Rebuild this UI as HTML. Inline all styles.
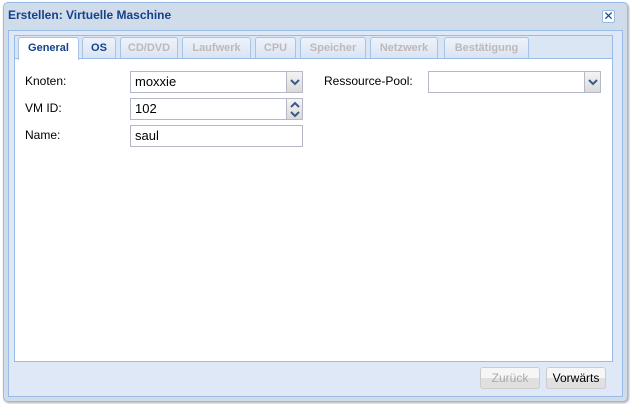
<!DOCTYPE html><html><head><style>
body{margin:0;width:630px;height:404px;background:#fff;font-family:"Liberation Sans",sans-serif;font-size:12px;position:relative;overflow:hidden}
.a{position:absolute;box-sizing:border-box}
.win{left:3px;top:2px;width:625px;height:400px;background:#d0dcea;border:1px solid #99bbe8;border-radius:5px;box-shadow:1px 1px 2px #aaa}
.tab{top:37px;height:21px;border:1px solid #a9c3e6;border-bottom:none;border-radius:3px 3px 0 0;background:linear-gradient(#eef3fb,#d9e4f3);font-weight:bold;font-size:11px;color:#c0b8b8;text-align:center;line-height:20px}
.fld{height:22px;border:1px solid #b5b8c8;background:#fff;padding-left:4px;line-height:20px;font-size:13px}
.trig{right:0;top:0;width:16px;height:20px;background:linear-gradient(#f4f4f4,#dadada);border-left:1px solid #b5b8c8}
.lbl{font-size:12px;color:#000}
.btn{top:367px;height:22px;border:1px solid #ccc;border-radius:3px;background:linear-gradient(#f6f6f6 50%,#e0e0e0 50%);text-align:center;line-height:20px;font-size:12px}
</style></head><body>
<div class="a win"></div>
<div class="a" style="left:8px;top:8px;font-weight:bold;color:#15428b;font-size:12px">Erstellen: Virtuelle Maschine</div>
<div class="a" style="left:602px;top:10px;width:13px;height:13px;border:1px solid #99bbe8;border-radius:2px;background:#fff;color:#15428b;font-size:12px;line-height:11px;text-align:center">✕</div>
<div class="a" style="left:8px;top:30px;width:615px;height:367px;background:#dfe8f6;border:1px solid #99bbe8"></div>
<div class="a" style="left:14px;top:35px;width:599px;height:327px;border:1px solid #99bbe8;background:#dbe6f5"></div>
<div class="a" style="left:15px;top:58px;width:597px;height:303px;background:#fff;border-top:1px solid #99bbe8"></div>
<div class="a tab" style="left:18px;width:61px;height:23px;background:#fff;color:#15428b">General</div>
<div class="a tab" style="left:82px;width:34px;color:#15428b">OS</div>
<div class="a tab" style="left:120px;width:58px">CD/DVD</div>
<div class="a tab" style="left:182px;width:69px">Laufwerk</div>
<div class="a tab" style="left:255px;width:41px">CPU</div>
<div class="a tab" style="left:300px;width:66px">Speicher</div>
<div class="a tab" style="left:370px;width:68px">Netzwerk</div>
<div class="a tab" style="left:444px;width:85px">Bestätigung</div>
<div class="a lbl" style="left:25px;top:74px">Knoten:</div>
<div class="a lbl" style="left:25px;top:101px">VM ID:</div>
<div class="a lbl" style="left:25px;top:128px">Name:</div>
<div class="a lbl" style="left:324px;top:74px">Ressource-Pool:</div>
<div class="a fld" style="left:130px;top:71px;width:173px">moxxie<div class="a trig"><svg width="16" height="20"><path d="M4 8l4 4 4-4" stroke="#3a5a8c" stroke-width="2" fill="none"/></svg></div></div>
<div class="a fld" style="left:130px;top:98px;width:173px">102<div class="a trig"><svg width="16" height="20"><path d="M4 8l4-4 4 4M4 13l4 4 4-4" stroke="#3a5a8c" stroke-width="2" fill="none"/></svg></div></div>
<div class="a fld" style="left:130px;top:125px;width:173px">saul</div>
<div class="a fld" style="left:428px;top:71px;width:173px"><div class="a trig"><svg width="16" height="20"><path d="M4 8l4 4 4-4" stroke="#3a5a8c" stroke-width="2" fill="none"/></svg></div></div>
<div class="a btn" style="left:480px;width:60px;color:#aaa">Zurück</div>
<div class="a btn" style="left:546px;width:60px">Vorwärts</div>
</body></html>
